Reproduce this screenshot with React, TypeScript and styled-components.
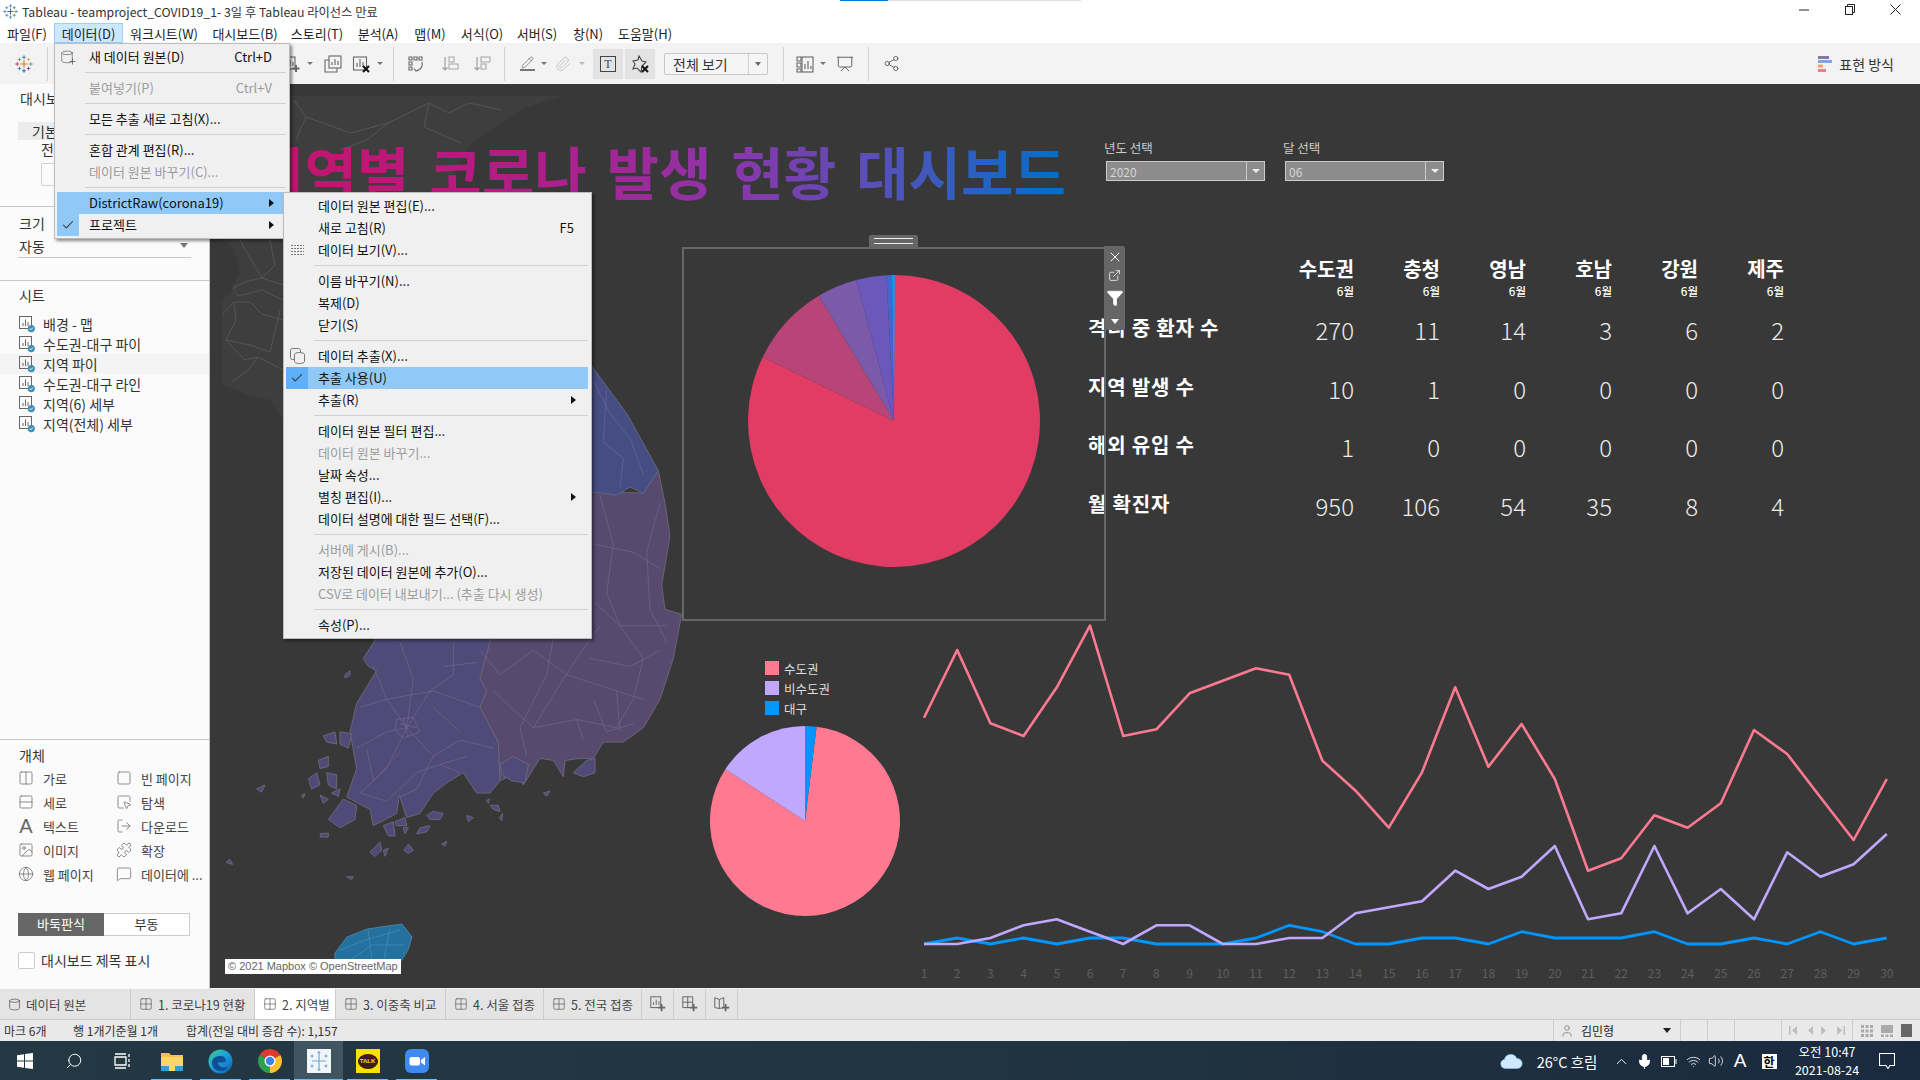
import React from "react";
import styled, { createGlobalStyle } from "styled-components";
import {
  Columns2, Rows2, Image as ImageIcon, Globe, Square, SquareMousePointer, LogOut, Puzzle, MessageSquare,
  Grid2x2, Cylinder, Pencil, Paperclip, Presentation, Share2, Search, ChevronUp, Mic, Wifi, Volume2, Check,
  User, ExternalLink, X, Filter, Plus,
} from "lucide-react";

const Global = createGlobalStyle`
  html, body { margin: 0; padding: 0; width: 1920px; height: 1080px; overflow: hidden; background: #383838; }
  body { font-family: "Noto Sans CJK KR", "Noto Sans", sans-serif; font-size: 12px; color: #222; }
  * { box-sizing: border-box; }
`;

const Window = styled.div`
  position: relative; width: 1920px; height: 1080px; display: flex; flex-direction: column; overflow: hidden;
`;

/* title bar */
const TitleBar = styled.div`
  position: relative; height: 23px; flex: none; background: #fff; display: flex; align-items: center;
  padding-left: 3px; gap: 4px; font-size: 12.3px; color: #333;
`;
const LoadTrack = styled.div`
  position: absolute; left: 840px; top: 0; width: 241px; height: 1px; background: #e0e0e0;
  &::before { content: ""; display: block; width: 48px; height: 100%; background: #0078d7; }
`;
const WindowButtons = styled.div`
  margin-left: auto; display: flex; align-items: center; height: 20px; margin-top: -4px; padding-right: 2px;
`;
const WindowButton = styled.div`
  width: 45.5px; display: flex; justify-content: center; align-items: center;
`;

/* menu bar */
const MenuBar = styled.div`
  height: 20px; flex: none; background: #fff; display: flex; align-items: stretch; font-size: 13px; color: #222;
`;
const MenuBarItem = styled.div<{ $open?: boolean; $w: number }>`
  width: ${(p) => p.$w}px; display: flex; align-items: center; justify-content: center; white-space: nowrap;
  background: ${(p) => (p.$open ? "#cce8ff" : "transparent")};
  border: 1px solid ${(p) => (p.$open ? "#99d1ff" : "transparent")};
`;

/* toolbar */
const Toolbar = styled.div`
  height: 41px; flex: none; background: #f3f3f3; display: flex; align-items: center; color: #666;
`;
const ToolSlot = styled.div<{ $w: number; $ml?: number; $on?: boolean }>`
  width: ${(p) => p.$w}px; margin-left: ${(p) => p.$ml ?? 0}px; height: 30px; flex: none;
  display: flex; align-items: center; justify-content: center;
  background: ${(p) => (p.$on ? "#e3e3e3" : "transparent")};
`;
const ToolCaret = styled.div<{ $ml?: number; $light?: boolean }>`
  width: 0; height: 0; flex: none; margin-left: ${(p) => p.$ml ?? 0}px;
  border-left: 3px solid transparent; border-right: 3px solid transparent;
  border-top: 3px solid ${(p) => (p.$light ? "#bbb" : "#777")};
`;
const ToolDivider = styled.div<{ $ml: number }>`
  width: 1px; height: 34px; flex: none; background: #d2d2d2; margin-left: ${(p) => p.$ml}px;
`;
const TextIconBox = styled.div`
  width: 16px; height: 16px; border: 1px solid #444; font-size: 12px; line-height: 14px; text-align: center; color: #444;
  font-family: "Liberation Serif", serif;
`;
const FitSelect = styled.div`
  width: 104px; height: 22px; margin-left: 9px; flex: none; background: #f5f5f5; border: 1px solid #c6c6c6; border-radius: 2px;
  display: flex; align-items: center; padding-left: 8px; font-size: 14px; color: #333;
`;
const FitArrow = styled.div`
  margin-left: auto; width: 19px; height: 100%; border-left: 1px solid #d0d0d0; display: flex; align-items: center; justify-content: center;
  &::after { content: ""; border-left: 3.5px solid transparent; border-right: 3.5px solid transparent; border-top: 4px solid #666; }
`;
const ShowMe = styled.div`
  margin-left: auto; padding-right: 26px; display: flex; align-items: center; gap: 7px; font-size: 14px; color: #333;
`;

/* main */
const Main = styled.div`
  height: 905px; flex: none; display: flex;
`;
const Sidebar = styled.aside`
  width: 210px; flex: none; background: #fbfbfb; display: flex; flex-direction: column; border-right: 1px solid #c4c4c4; font-size: 14px; color: #333;
`;
const DashSection = styled.section`
  height: 123px; flex: none; border-bottom: 1px solid #c8c8c8; padding: 5px 0 0 19px;
`;
const SizeSection = styled.section`
  height: 74px; flex: none; border-bottom: 1px solid #c8c8c8; padding: 7px 18px 0 18px;
`;
const SheetSection = styled.section`
  flex: 1; border-bottom: 1px solid #c8c8c8; padding-top: 5px;
`;
const ObjectSection = styled.section`
  height: 249px; flex: none; padding: 6px 18px 0;
`;
const SectionTitle = styled.div`
  font-size: 14px; line-height: 18px; color: #333; padding-left: 1px;
`;
const LayoutTab = styled.div`
  margin: 15px 0 0 -1px; height: 18px; line-height: 18px; background: #ececec; padding-left: 14px;
`;
const LayoutSub = styled.div`
  padding: 0 0 0 22px; height: 18px; line-height: 18px;
`;
const DeviceButton = styled.div`
  margin: 5px 0 0 22px; width: 60px; height: 23px; border: 1px solid #d0d0d0; border-radius: 2px;
`;
const SizeSelect = styled.div`
  margin-top: 2px; height: 24px; border-bottom: 1px solid #c8c8c8; display: flex; align-items: center; justify-content: space-between;
  padding: 0 3px 0 1px;
  &::after { content: ""; border-left: 4px solid transparent; border-right: 4px solid transparent; border-top: 5px solid #777; }
`;
const SheetTitle = styled(SectionTitle)`
  padding-left: 19px; margin-bottom: 10px;
`;
const SheetRow = styled.div<{ $hover?: boolean }>`
  height: 20px; display: flex; align-items: center; gap: 7px; padding-left: 19px;
  background: ${(p) => (p.$hover ? "#f4f4f4" : "transparent")};
`;
const ObjectGrid = styled.div`
  margin-top: 2px; display: grid; grid-template-columns: 98px 1fr; grid-auto-rows: 24px; align-items: center; font-size: 13px;
`;
const ObjectItem = styled.div`
  display: flex; align-items: center; white-space: nowrap; color: #444;
  & > svg, & > b { width: 16px; margin-right: 9px; flex: none; color: #666; }
  & > b { font-weight: 400; font-size: 20px; line-height: 20px; text-align: center; font-family: "Liberation Sans", sans-serif; }
`;
const LayoutToggle = styled.div`
  margin-top: 27px; width: 172px; height: 23px; display: grid; grid-template-columns: 86px 86px; text-align: center; line-height: 20px; font-size: 13px;
`;
const ToggleOn = styled.div`
  background: #666; color: #fff; border: 1px solid #666;
`;
const ToggleOff = styled.div`
  background: #fff; border: 1px solid #ccc; border-left: none;
`;
const TitleCheck = styled.div`
  margin-top: 14px; display: flex; align-items: center; gap: 6px;
  &::before { content: ""; width: 15px; height: 15px; background: #fff; border: 1px solid #ccc; border-radius: 2px; }
`;

/* canvas */
const Canvas = styled.div`
  position: relative; flex: 1; background: #383838; overflow: hidden; border-bottom: 1px solid #f4f4f4;
`;
const MapLayer = styled.svg`
  position: absolute; left: 0; top: 0; width: 1710px; height: 904px;
`;
const Attribution = styled.div`
  position: absolute; left: 15px; top: 875px; width: 176px; height: 15px; background: #fff; color: #666; white-space: nowrap;
  font: 11px/15px "Liberation Sans", sans-serif; padding-left: 3px;
`;
const Headline = styled.h1`
  position: absolute; left: 42px; top: 52px; margin: 0; white-space: nowrap; font-size: 57px; line-height: 68px; font-weight: 700;
  word-spacing: 7px;
  background: linear-gradient(90deg, #c8126a 0%, #b01e88 35%, #8d35aa 58%, #5a4fb8 76%, #0070c8 100%);
  -webkit-background-clip: text; background-clip: text; color: transparent;
`;
const ParamBox = styled.div<{ $left: number }>`
  position: absolute; left: ${(p) => p.$left}px; top: 57px; width: 160px; color: #ccc; font-size: 12.5px;
`;
const ParamLabel = styled.div`
  height: 20px; line-height: 14px;
`;
const ParamSelect = styled.div`
  margin-left: 2px; width: 159px; height: 20px; border: 1px solid #ccc; background: #8c8c8c; color: #d8d8d8; display: flex; align-items: center; padding-left: 3px; font-size: 12px;
`;
const ParamArrow = styled.div`
  margin-left: auto; width: 18px; height: 100%; border-left: 1px solid #ccc; display: flex; align-items: center; justify-content: center;
  &::after { content: ""; border-left: 4px solid transparent; border-right: 4px solid transparent; border-top: 4px solid #eee; }
`;
const SelectedFrame = styled.div`
  position: absolute; left: 472px; top: 163px; width: 424px; height: 374px; border: 2px solid #666;
  display: flex; justify-content: center; align-items: flex-start; padding-top: 26px;
`;
const FrameHandle = styled.div`
  position: absolute; left: 185px; top: -14px; width: 49px; height: 12px; background: #666; border-radius: 2px 2px 0 0;
  &::after { content: ""; position: absolute; left: 5px; right: 5px; top: 3px; height: 4px; border-top: 1px solid #eee; border-bottom: 1px solid #eee; }
`;
const FrameTools = styled.div`
  position: absolute; left: 894px; top: 162px; width: 21px; height: 84px; background: #666; border-radius: 0 2px 2px 0; z-index: 3;
  display: flex; flex-direction: column; align-items: center; padding-top: 3px; gap: 4px; color: #fff;
`;
const FunnelIcon = styled(Filter)`
  margin-top: 3px;
`;
const FrameCaret = styled.div`
  margin-top: 8px; border-left: 4px solid transparent; border-right: 4px solid transparent; border-top: 5px solid #fff;
`;
const CrossTab = styled.div`
  position: absolute; left: 878px; top: 172px; display: grid; grid-template-columns: 180px repeat(6, 86px); color: #fff;
`;
const HeadCell = styled.div`
  text-align: right; font-weight: 700; font-size: 20px; line-height: 25px; height: 44px; display: flex; flex-direction: column; align-items: flex-end;
`;
const HeadSub = styled.span`
  font-size: 11.5px; line-height: 18px; margin-top: 1px; font-weight: 500;
`;
const RowLabel = styled.div`
  font-weight: 700; font-size: 20px; height: 58.7px; line-height: 56px; color: #fff; letter-spacing: 0.8px; white-space: nowrap;
`;
const ValueCell = styled.div`
  font-size: 24px; height: 58.7px; line-height: 60px; text-align: right; font-weight: 300; color: #ececec;
`;
const Corner = styled.div``;
const Legend = styled.div`
  position: absolute; left: 555px; top: 577px; display: flex; flex-direction: column; gap: 6px; color: #ddd; font-size: 12.5px;
`;
const LegendRow = styled.div`
  display: flex; align-items: center; gap: 5px; height: 14px;
`;
const Swatch = styled.span<{ $c: string }>`
  width: 14px; height: 14px; background: ${(p) => p.$c};
`;
const SmallPie = styled.svg`
  position: absolute; left: 499px; top: 641px;
`;
const LineChart = styled.svg`
  position: absolute; left: 690px; top: 536px; width: 1020px; height: 368px;
`;

/* tabs */
const TabBar = styled.div`
  height: 31px; flex: none; background: #e4e4e4; border-bottom: 1px solid #ccc; display: flex; align-items: stretch; font-size: 12.5px; color: #444;
`;
const Tab = styled.div<{ $w: number; $active?: boolean }>`
  width: ${(p) => p.$w}px; flex: none; display: flex; align-items: center; gap: 5px; padding-left: 8px; white-space: nowrap;
  border-right: 1px solid #ccc; background: ${(p) => (p.$active ? "#fff" : "transparent")};
`;
const TabTool = styled.div`
  width: 32px; flex: none; display: flex; align-items: center; justify-content: center; border-right: 1px solid #ccc; position: relative; color: #666;
`;
const StatusBar = styled.div`
  height: 21px; flex: none; background: #e9e9e9; display: flex; align-items: center; font-size: 12px; color: #333;
`;
const StatusText = styled.span<{ $w: number }>`
  width: ${(p) => p.$w}px; flex: none; padding-left: 4px; white-space: nowrap;
`;
const UserCell = styled.div`
  margin-left: auto; width: 127px; height: 100%; flex: none; display: flex; align-items: center; gap: 7px; padding-left: 6px; border-left: 1px solid #ccc; color: #222;
  &::after { content: ""; margin-left: 42px; border-left: 4px solid transparent; border-right: 4px solid transparent; border-top: 5px solid #222; }
`;
const StatusCell = styled.div<{ $w: number }>`
  width: ${(p) => p.$w}px; height: 100%; flex: none; border-left: 1px solid #ccc; display: flex; align-items: center; justify-content: space-evenly;
`;

/* taskbar */
const Taskbar = styled.div`
  height: 40px; flex: none; background: linear-gradient(90deg, #233842 0%, #213540 50%, #1b2a3f 100%); display: flex; align-items: center; color: #fff;
`;
const TaskSlot = styled.div<{ $run?: boolean; $active?: boolean }>`
  position: relative; width: 49px; height: 100%; flex: none; display: flex; align-items: center; justify-content: center;
  background: ${(p) => (p.$active ? "#40555f" : "transparent")};
  &::after {
    content: ""; position: absolute; left: ${(p) => (p.$active ? 0 : 4)}px; right: ${(p) => (p.$active ? 0 : 4)}px; bottom: 0; height: 2px;
    background: ${(p) => (p.$run ? "#76b9ed" : "transparent")};
  }
`;
const Tray = styled.div`
  margin-left: auto; height: 100%; display: flex; align-items: center; padding-right: 15px;
`;
const TrayCell = styled.div<{ $w: number }>`
  width: ${(p) => p.$w}px; flex: none; display: flex; align-items: center; justify-content: center; white-space: nowrap; font-size: 12.5px;
`;
const Weather = styled(TrayCell)`
  font-size: 14.5px;
`;
const ImeBadge = styled.span`
  width: 15px; height: 15px; background: #fff; color: #000; font-size: 12px; line-height: 15px; text-align: center; font-weight: 700;
`;
const ImeLatin = styled.span`
  font-size: 19px; font-family: "Liberation Sans", sans-serif; font-weight: 400;
`;
const Clock = styled.div`
  display: flex; flex-direction: column; align-items: center; line-height: 18px; font-size: 12.5px;
`;
const KakaoIcon = styled.div`
  width: 24px; height: 24px; background: #fae100; display: flex; align-items: center; justify-content: center;
`;
const KakaoBubble = styled.div`
  width: 20px; height: 15px; border-radius: 50%; background: #3a1d1d; color: #fae100; font: 700 6px/15px "Liberation Sans", sans-serif; text-align: center;
`;

/* menus */
const PopupMenu = styled.div<{ $left: number; $top: number; $w: number }>`
  position: absolute; left: ${(p) => p.$left}px; top: ${(p) => p.$top}px; width: ${(p) => p.$w}px; z-index: 10;
  background: #f0f0f0; border: 1px solid #bcbcbc; padding: 2px 3px 2px 2px; box-shadow: 2px 2px 3px rgba(0,0,0,.45);
  font-size: 13px; color: #111;
`;
const MenuRow = styled.div<{ $hl?: boolean; $off?: boolean }>`
  height: 22px; display: flex; align-items: center; white-space: nowrap;
  background: ${(p) => (p.$hl ? "#90c8f6" : "transparent")};
  color: ${(p) => (p.$off ? "#9c9c9c" : "#111")};
`;
const MenuIcon = styled.div<{ $check?: "hl" | "dark" }>`
  width: 22px; height: 100%; flex: none; display: flex; align-items: center; justify-content: center; color: #555;
  background: ${(p) => (p.$check === "hl" ? "#5eb0f8" : p.$check === "dark" ? "#90c8f6" : "transparent")};
`;
const MenuLabel = styled.div`
  padding: 0 0 2px 10px; flex: 1;
`;
const MenuKey = styled.div`
  padding: 0 14px 2px 0;
`;
const MenuArrow = styled.div`
  margin-right: 12px; border-top: 4px solid transparent; border-bottom: 4px solid transparent; border-left: 5px solid #111;
`;
const MenuSep = styled.div<{ $inset: number }>`
  height: 9px; display: flex; align-items: center; padding-left: ${(p) => p.$inset}px;
  &::after { content: ""; flex: 1; height: 1px; background: #d0d0d0; }
`;

/* ---- drawings ---- */
const TableauMark = ({ size, mono }: { size: number; mono?: string }) => {
  const c = (col: string) => mono ?? col;
  const plus = (x: number, y: number, r: number, col: string, k: number) => (
    <path key={k} d={`M${x - r} ${y}H${x + r}M${x} ${y - r}V${y + r}`} stroke={c(col)} strokeWidth={r > 3 ? 1.6 : 1.1} fill="none" />
  );
  return (
    <svg width={size} height={size} viewBox="0 0 24 24">
      {[
        [12, 12, 5, "#e8762b"], [12, 3, 2.6, "#1f77b4"], [12, 21, 2.6, "#1f4f8a"], [3, 12, 2.6, "#c72035"], [21, 12, 2.6, "#5b879b"],
        [6, 6, 2.4, "#59a14f"], [18, 6, 2.4, "#eb9e3e"], [6, 18, 2.4, "#1f77b4"], [18, 18, 2.4, "#7b3294"],
      ].map((p, i) => plus(p[0] as number, p[1] as number, p[2] as number, p[3] as string, i))}
    </svg>
  );
};
const Ico = ({ children, w = 20, h = 20, vb = "0 0 20 20", color = "#666" }: { children: React.ReactNode; w?: number; h?: number; vb?: string; color?: string }) => (
  <svg width={w} height={h} viewBox={vb} fill="none" stroke={color} strokeWidth="1.1">{children}</svg>
);
const SheetIcon = () => (
  <svg width="17" height="17" viewBox="0 0 17 17" fill="none" style={{ flex: "none" }}>
    <rect x=".5" y=".5" width="12" height="12" stroke="#666" />
    <path d="M4 10V7M6.5 10V3.5M9 10V6" stroke="#666" />
    <circle cx="12.3" cy="12.6" r="3.6" fill="#3f8fb5" />
    <path d="M10.6 12.6l1.2 1.2 2.1-2.2" stroke="#fff" strokeWidth="1" />
  </svg>
);
const NavGlyph = ({ dir, bar }: { dir: "l" | "r"; bar?: boolean }) => (
  <svg width="9" height="9" viewBox="0 0 9 9" fill="#bdbdbd">
    {dir === "l" ? <path d="M8 0v9L3 4.500z" /> : <path d="M1 0v9l5-4.500z" />}
    {bar && (dir === "l" ? <rect x="0" width="1.500" height="9" /> : <rect x="7.500" width="1.500" height="9" />)}
  </svg>
);
const wedge = (cx: number, cy: number, r: number, a0: number, a1: number) => {
  const p = (a: number) => [cx + r * Math.sin((a * Math.PI) / 180), cy - r * Math.cos((a * Math.PI) / 180)];
  const [x0, y0] = p(a0), [x1, y1] = p(a1);
  return `M${cx} ${cy}L${x0} ${y0}A${r} ${r} 0 ${a1 - a0 > 180 ? 1 : 0} 1 ${x1} ${y1}Z`;
};

const pinkY = [353,150,370,408,262,77,408,388,280,242,205,224,482,572,683,517,262,500,372,537,812,775,646,683,610,390,462,592,720,537];
const purpleY = [1032,1032,1014,976,958,995,1032,976,976,1032,1032,1014,1014,940,922,904,812,867,830,738,958,940,738,940,867,958,757,830,793,702];
const blueY = [1032,1014,1032,1014,1032,1014,1014,1032,1032,1032,1014,976,995,1032,1032,1014,1014,1032,995,1014,1014,1014,995,1032,1032,1014,1032,995,1032,1014];
const linePts = (ys: number[]) => ys.map((y, i) => `${(924 + i * 33.2).toFixed(1)},${(600 + y / 3).toFixed(1)}`).join(" ");

const westPts = "530,730 490,780 505,800 530,810 470,890 450,960 470,1050 440,1120 510,1150 520,1190 590,1160 598,1115 620,1170 660,1160 700,1110 740,1085 790,1060 830,1110 870,1110 900,1080 895,985 840,900 860,860 840,830 870,740 900,700 700,600";
const gyeongPts = "895,985 840,900 860,860 840,830 870,740 900,700 1100,500 1176,372 1330,375 1375,320 1395,400 1410,480 1385,600 1395,660 1445,672 1420,780 1380,880 1330,950 1270,985 1210,985 1180,1025 1140,1025 1095,1030 1090,1070 1060,1030 1020,1025 970,1090 950,1060 900,1080";
const gangPts = "1100,300 1176,65 1280,180 1375,320 1330,375 1290,360 1250,380 1176,372 1100,500";
const islands = [
  "385,1175 430,1125 470,1140 465,1175 420,1195","325,1075 350,1060 360,1090 335,1100","355,1030 385,1020 385,1045 360,1050",
  "370,970 405,960 410,990 380,985","420,960 455,965 445,1000 420,990","380,1060 410,1065 410,1100 385,1090","360,1115 385,1125 370,1135",
  "395,1110 420,1100 415,1118","550,1190 580,1180 585,1215 565,1215","585,1180 615,1170 620,1190 590,1190","610,1195 625,1195 615,1210",
  "680,1165 700,1155 730,1160 720,1175 690,1175","800,1165 820,1170 805,1180","660,1195 690,1190 680,1205 650,1210","510,1255 540,1230 545,1250 525,1265",
  "550,1250 565,1245 555,1265","612,1250 625,1235 640,1250 625,1258","725,1235 740,1228 735,1240","898,1170 908,1160 905,1178","1030,1110 1050,1105 1040,1118",
  "860,1128 868,1125 865,1135","870,1140 895,1140 900,1155 880,1150","360,1210 385,1208 385,1218 362,1218","170,1100 195,1090 185,1108",
  "305,1115 315,1112 310,1122","78,1280 90,1272 98,1285","440,1315 460,1315 455,1322","435,820 450,810 450,822 435,828",
  "900,1040 940,1020 985,1040 975,1085 935,1080 905,1065","1120,1060 1160,1030 1185,1025 1185,1060 1150,1070",
];
const roads = [
  "1180,100 1230,180 1290,240 1330,330","1220,120 1210,250 1270,290 1260,360","1180,500 1300,520 1380,560","1200,380 1240,500 1220,620 1260,700 1330,780 1300,880 1250,950",
  "1380,400 1340,520 1350,660 1400,740","1180,640 1260,700 1400,700","1000,760 1100,820 1250,860 1330,880","880,860 1000,950 1130,930 1250,950",
  "1000,950 1060,870 1130,780 1200,700","1060,730 1040,820 960,950 980,1020","1130,930 1150,980","1250,860 1260,960","1170,780 1290,800 1380,760",
  "600,740 640,830 620,950 700,1020 780,980 880,1000","760,740 760,820 690,860 620,950","520,800 560,880 620,950","470,1000 560,960 620,950",
  "620,950 560,1050 480,1110 560,1130 650,1060 720,1040 800,1020","700,1020 650,1100 600,1120","480,900 560,880 700,860 840,900","720,1040 780,1060",
  "590,930 640,925 660,960 610,975 585,955 590,930","600,940 650,950","610,925 625,975","840,760 900,820 1000,760","1180,880 1220,960 1300,940",
  "500,1000 520,1080 600,1010","700,900 780,960","730,800 830,790",
];
const baseRoads = [
  "233,288 245,282 262,278 283,285","233,288 238,296 262,290 283,300","283,320 262,314 250,302 234,302 222,315","234,302 236,320 226,340 250,345 270,352",
  "226,340 245,360 258,357 283,370","258,357 248,370 232,382","270,352 280,310","270,240 275,265 262,278","240,240 250,258 262,278",
  "294,100 306,117 351,133 388,123 429,103 449,113 469,103 502,110","429,103 424,127 461,143","388,123 367,140 340,150","306,117 296,140",
  "500,750 510,735 560,730 590,745",
];

const MAP_TF = "translate(200 340) scale(.33333 .40816)";

const DashboardMap = () => (
  <MapLayer viewBox="210 84 1710 904">
    <polygon points="222,96 563,96 520,110 470,145 440,200 420,240 283,420 270,400 250,395 222,385 222,300 230,293 240,270 233,247 222,240" fill="#3e3e3e" />
    <g stroke="#555" strokeWidth="1" fill="none">{baseRoads.map((r) => <polyline key={r} points={r} />)}</g>
    <g transform={MAP_TF}>
      <polygon points={westPts} fill="#504a78" stroke="#6a6578" strokeWidth="1" vectorEffect="non-scaling-stroke" />
      <polygon points={gyeongPts} fill="#574a6e" stroke="#6a6578" strokeWidth="1" vectorEffect="non-scaling-stroke" />
      <polygon points={gangPts} fill="#454d82" stroke="#5f6885" strokeWidth="1" vectorEffect="non-scaling-stroke" />
      {islands.map((p) => <polygon key={p} points={p} fill="#504a78" stroke="#6a6578" strokeWidth="1" vectorEffect="non-scaling-stroke" />)}
      <g stroke="#7a7299" strokeOpacity=".5" strokeWidth="1" fill="none">
        {roads.map((r) => <polyline key={r} points={r} vectorEffect="non-scaling-stroke" />)}
      </g>
    </g>
    <polygon points="335,953 347,937 367,929 402,924 412,937 408,950 398,966 335,966" fill="#22719f" stroke="#4c7f9e" />
    <g stroke="#4a8db3" strokeOpacity=".7" fill="none">
      <polyline points="340,950 365,940 400,930" /><polyline points="350,960 372,945 404,945" /><polyline points="368,930 372,960" /><polyline points="390,928 384,960" />
    </g>
  </MapLayer>
);

const months = ["수도권", "충청", "영남", "호남", "강원", "제주"];
const rows: [string, number[]][] = [
  ["격리 중 환자 수", [270, 11, 14, 3, 6, 2]],
  ["지역 발생 수", [10, 1, 0, 0, 0, 0]],
  ["해외 유입 수", [1, 0, 0, 0, 0, 0]],
  ["월 확진자", [950, 106, 54, 35, 8, 4]],
];
const sheets = ["배경 - 맵", "수도권-대구 파이", "지역 파이", "수도권-대구 라인", "지역(6) 세부", "지역(전체) 세부"];
const iconProps = { size: 16, strokeWidth: 1.1 };

export default function App() {
  return (
    <Window>
      <Global />
      <TitleBar>
        <LoadTrack />
        <TableauMark size={15} mono="#2f78b4" />
        <span>Tableau - teamproject_COVID19_1- 3일 후 Tableau 라이선스 만료</span>
        <WindowButtons>
          <WindowButton><svg width="10" height="10" viewBox="0 0 10 10"><path d="M0 5h10" stroke="#222" /></svg></WindowButton>
          <WindowButton><svg width="10" height="11" viewBox="0 0 10 11" fill="none" stroke="#222"><rect x=".5" y="2.5" width="7" height="8" /><path d="M2.5 2.5v-2h7v8h-2" /></svg></WindowButton>
          <WindowButton><svg width="11" height="11" viewBox="0 0 11 11"><path d="M.5.5l10 10M10.500.5l-10 10" stroke="#222" /></svg></WindowButton>
        </WindowButtons>
      </TitleBar>
      <MenuBar>
        <MenuBarItem $w={54}>파일(F)</MenuBarItem>
        <MenuBarItem $w={69} $open>데이터(D)</MenuBarItem>
        <MenuBarItem $w={82}>워크시트(W)</MenuBarItem>
        <MenuBarItem $w={80}>대시보드(B)</MenuBarItem>
        <MenuBarItem $w={64}>스토리(T)</MenuBarItem>
        <MenuBarItem $w={58}>분석(A)</MenuBarItem>
        <MenuBarItem $w={46}>맵(M)</MenuBarItem>
        <MenuBarItem $w={58}>서식(O)</MenuBarItem>
        <MenuBarItem $w={52}>서버(S)</MenuBarItem>
        <MenuBarItem $w={50}>창(N)</MenuBarItem>
        <MenuBarItem $w={64}>도움말(H)</MenuBarItem>
      </MenuBar>
      <Toolbar>
        <ToolSlot $w={47}><TableauMark size={18} /></ToolSlot>
        <ToolDivider $ml={0} />
        <ToolSlot $w={28} $ml={229}>
          <Ico><rect x="3" y="3" width="11" height="12" /><path d="M6 12V9M9 12V6M12 12V8" /><path d="M15 11v7M11.500 14.500h7" strokeWidth="2" /></Ico>
        </ToolSlot>
        <ToolCaret $ml={2} />
        <ToolSlot $w={26} $ml={7}>
          <Ico><rect x="6" y="2" width="12" height="12" /><path d="M6 6H2v12h12v-4" /><path d="M9 11V8M12 11V5M15 11V7" /></Ico>
        </ToolSlot>
        <ToolSlot $w={28} $ml={1}>
          <Ico><rect x="2.500" y="3" width="13" height="13" /><path d="M6 13V9M9 13V5M12 13V8" /><path d="M12 12l6 6M18 12l-6 6" stroke="#111" strokeWidth="2" /></Ico>
        </ToolSlot>
        <ToolCaret $ml={2} />
        <ToolDivider $ml={10} />
        <ToolSlot $w={26} $ml={9}>
          <Ico><path d="M3 3h3v3H3zM8 3h3v3H8zM13 3h3v3h-3zM3 8h3v3H3zM3 13h3v3H3z" /><path d="M16 8c1 4-1 8-6 9M8 14.500l2 2.500 3-1" /></Ico>
        </ToolSlot>
        <ToolSlot $w={26} $ml={8}>
          <Ico color="#aaa"><path d="M5 3v13M2.500 13.500L5 16l2.500-2.500" stroke="#999" /><rect x="9" y="3" width="5" height="5" /><rect x="9" y="10" width="9" height="5" /></Ico>
        </ToolSlot>
        <ToolSlot $w={26} $ml={6}>
          <Ico color="#aaa"><path d="M5 3v13M2.500 13.500L5 16l2.500-2.500" stroke="#999" /><rect x="9" y="3" width="9" height="5" /><rect x="9" y="10" width="5" height="5" /></Ico>
        </ToolSlot>
        <ToolDivider $ml={9} />
        <ToolSlot $w={26} $ml={9}>
          <Pencil size={15} strokeWidth={1.1} color="#555" style={{ borderBottom: "2px solid #777" }} />
        </ToolSlot>
        <ToolCaret $ml={1} />
        <ToolSlot $w={26} $ml={3}><Paperclip size={16} strokeWidth={1.2} color="#bbb" /></ToolSlot>
        <ToolCaret $ml={3} $light />
        <ToolSlot $w={30} $ml={8} $on><TextIconBox>T</TextIconBox></ToolSlot>
        <ToolSlot $w={30} $ml={2} $on>
          <Ico color="#444"><path d="M9 2l3 5 4 1-4 4-1 6-4-4-4 1 2-5-2-3 5-1z" /><path d="M12 12l6 6M18 12l-6 6" stroke="#111" strokeWidth="2" /></Ico>
        </ToolSlot>
        <FitSelect>전체 보기<FitArrow /></FitSelect>
        <ToolDivider $ml={15} />
        <ToolSlot $w={26} $ml={8}>
          <Ico><path d="M2 3h4v4H2zM2 9h4v4H2zM2 15h4v3H2z" /><rect x="7" y="3" width="11" height="15" /><path d="M10 15v-5M13 15V7M16 15v-3" /></Ico>
        </ToolSlot>
        <ToolCaret $ml={2} />
        <ToolSlot $w={26} $ml={6}><Presentation size={18} strokeWidth={1.2} color="#555" /></ToolSlot>
        <ToolDivider $ml={10} />
        <ToolSlot $w={26} $ml={9}><Share2 size={17} strokeWidth={1.2} color="#555" /></ToolSlot>
        <ShowMe>
          <svg width="14" height="16" viewBox="0 0 14 16"><rect width="11" height="3" fill="#8b74a6" /><rect y="4" width="14" height="3" fill="#7ea6d6" /><rect y="8.500" width="5" height="3" fill="#f2a36b" /><rect y="13" width="8" height="3" fill="#f47c86" /></svg>
          표현 방식
        </ShowMe>
      </Toolbar>
      <Main>
        <Sidebar>
          <DashSection>
            <SectionTitle>대시보드</SectionTitle>
            <LayoutTab>기본</LayoutTab>
            <LayoutSub>전화</LayoutSub>
            <DeviceButton />
          </DashSection>
          <SizeSection>
            <SectionTitle>크기</SectionTitle>
            <SizeSelect>자동</SizeSelect>
          </SizeSection>
          <SheetSection>
            <SheetTitle>시트</SheetTitle>
            {sheets.map((s, i) => (
              <SheetRow key={s} $hover={i === 2}><SheetIcon />{s}</SheetRow>
            ))}
          </SheetSection>
          <ObjectSection>
            <SectionTitle>개체</SectionTitle>
            <ObjectGrid>
              <ObjectItem><Columns2 {...iconProps} />가로</ObjectItem>
              <ObjectItem><Square {...iconProps} />빈 페이지</ObjectItem>
              <ObjectItem><Rows2 {...iconProps} />세로</ObjectItem>
              <ObjectItem><SquareMousePointer {...iconProps} />탐색</ObjectItem>
              <ObjectItem><b>A</b>텍스트</ObjectItem>
              <ObjectItem><LogOut {...iconProps} />다운로드</ObjectItem>
              <ObjectItem><ImageIcon {...iconProps} />이미지</ObjectItem>
              <ObjectItem><Puzzle {...iconProps} />확장</ObjectItem>
              <ObjectItem><Globe {...iconProps} />웹 페이지</ObjectItem>
              <ObjectItem><MessageSquare {...iconProps} />데이터에 ...</ObjectItem>
            </ObjectGrid>
            <LayoutToggle><ToggleOn>바둑판식</ToggleOn><ToggleOff>부동</ToggleOff></LayoutToggle>
            <TitleCheck>대시보드 제목 표시</TitleCheck>
          </ObjectSection>
        </Sidebar>
        <Canvas>
          <DashboardMap />
          <Attribution>© 2021 Mapbox © OpenStreetMap</Attribution>
          <Headline>지역별 코로나 발생 현황 대시보드</Headline>
          <ParamBox $left={894}>
            <ParamLabel>년도 선택</ParamLabel>
            <ParamSelect>2020<ParamArrow /></ParamSelect>
          </ParamBox>
          <ParamBox $left={1073}>
            <ParamLabel>달 선택</ParamLabel>
            <ParamSelect>06<ParamArrow /></ParamSelect>
          </ParamBox>
          <CrossTab>
            <Corner />
            {months.map((m) => (
              <HeadCell key={m}>{m}<HeadSub>6월</HeadSub></HeadCell>
            ))}
            {rows.map(([label, vals]) => (
              <React.Fragment key={label}>
                <RowLabel>{label}</RowLabel>
                {vals.map((v, i) => <ValueCell key={i}>{v}</ValueCell>)}
              </React.Fragment>
            ))}
          </CrossTab>
          <SelectedFrame>
            <FrameHandle />
            <svg width="292" height="292" viewBox="-146 -146 292 292">
              <path d={wedge(0, 0, 146, 0, 296)} fill="#e03c64" />
              <path d={wedge(0, 0, 146, 296, 329)} fill="#b84577" />
              <path d={wedge(0, 0, 146, 329, 345)} fill="#7c5aaa" />
              <path d={wedge(0, 0, 146, 345, 357)} fill="#6a58bb" />
              <path d={wedge(0, 0, 146, 357, 359.2)} fill="#4466d0" />
              <path d={wedge(0, 0, 146, 359.2, 360.3)} fill="#00a0ff" />
            </svg>
          </SelectedFrame>
          <FrameTools>
            <X size={16} strokeWidth={1.5} />
            <ExternalLink size={13} strokeWidth={1.4} />
            <FunnelIcon size={18} fill="#fff" strokeWidth={1} />
            <FrameCaret />
          </FrameTools>
          <Legend>
            <LegendRow><Swatch $c="#ff7a90" />수도권</LegendRow>
            <LegendRow><Swatch $c="#c0a8ff" />비수도권</LegendRow>
            <LegendRow><Swatch $c="#0096ff" />대구</LegendRow>
          </Legend>
          <SmallPie width="192" height="192" viewBox="-96 -96 192 192">
            <path d={wedge(0, 0, 95, 7, 303)} fill="#ff7a90" />
            <path d={wedge(0, 0, 95, 303, 360)} fill="#c0a8ff" />
            <path d={wedge(0, 0, 95, 0, 7)} fill="#0096ff" />
          </SmallPie>
          <LineChart viewBox="900 620 1020 368">
            <polyline points={linePts(pinkY)} fill="none" stroke="#ff7a90" strokeWidth="2.6" strokeLinejoin="round" />
            <polyline points={linePts(blueY)} fill="none" stroke="#0096ff" strokeWidth="2.8" strokeLinejoin="round" />
            <polyline points={linePts(purpleY)} fill="none" stroke="#c0a8ff" strokeWidth="2.6" strokeLinejoin="round" />
            {pinkY.map((_, i) => (
              <text key={i} x={924 + i * 33.2} y={978} fill="#5f5f5f" fontSize="12" textAnchor="middle" fontFamily="Noto Sans CJK KR, sans-serif">{i + 1}</text>
            ))}
          </LineChart>
        </Canvas>
      </Main>
      <TabBar>
        <Tab $w={131}><Cylinder size={13} strokeWidth={1.2} />데이터 원본</Tab>
        <Tab $w={124}><Grid2x2 size={14} strokeWidth={1} />1. 코로나19 현황</Tab>
        <Tab $w={81} $active><Grid2x2 size={14} strokeWidth={1} />2. 지역별</Tab>
        <Tab $w={110}><Grid2x2 size={14} strokeWidth={1} />3. 이중축 비교</Tab>
        <Tab $w={98}><Grid2x2 size={14} strokeWidth={1} />4. 서울 접종</Tab>
        <Tab $w={98}><Grid2x2 size={14} strokeWidth={1} />5. 전국 접종</Tab>
        <TabTool><Ico w={18} h={18} vb="0 0 20 20"><rect x="2" y="2" width="11" height="12" /><path d="M5 11V8M8 11V5M11 11V7" /><path d="M14 10v8M10 14h8" strokeWidth="2" /></Ico></TabTool>
        <TabTool><Ico w={18} h={18} vb="0 0 20 20"><path d="M2 2h11v12H2zM7.500 2v12M2 8h11" /><path d="M14 10v8M10 14h8" strokeWidth="2" /></Ico></TabTool>
        <TabTool><Ico w={18} h={18} vb="0 0 20 20"><path d="M2 3l5 2 5-2v11l-5 1-5-1zM7 5v10" /><path d="M14 10v8M10 14h8" strokeWidth="2" /></Ico></TabTool>
      </TabBar>
      <StatusBar>
        <StatusText $w={69}>마크 6개</StatusText>
        <StatusText $w={113}>행 1개기준월 1개</StatusText>
        <StatusText $w={260}>합계(전일 대비 증감 수): 1,157</StatusText>
        <UserCell><User size={14} strokeWidth={1.1} color="#666" /><span>김민형</span></UserCell>
        <StatusCell $w={27} />
        <StatusCell $w={27} />
        <StatusCell $w={47} />
        <StatusCell $w={71}><NavGlyph dir="l" bar /><NavGlyph dir="l" /><NavGlyph dir="r" /><NavGlyph dir="r" bar /></StatusCell>
        <StatusCell $w={68}>
          <svg width="12" height="12" viewBox="0 0 12 12" fill="#aaa"><path d="M0 0h3v3H0zM4.500 0h3v3h-3zM9 0h3v3H9zM0 4.500h3v3H0zM4.500 4.500h3v3h-3zM9 4.500h3v3H9zM0 9h3v3H0zM4.500 9h3v3h-3zM9 9h3v3H9z" /></svg>
          <svg width="12" height="12" viewBox="0 0 12 12" fill="#aaa"><path d="M0 0h12v8H0zM0 9.500h3V12H0zM4.500 9.500h3V12h-3zM9 9.500h3V12H9z" /></svg>
          <svg width="11" height="13" viewBox="0 0 11 13" fill="#666"><rect width="11" height="13" /></svg>
        </StatusCell>
      </StatusBar>
      <Taskbar>
        <TaskSlot>
          <svg width="16" height="16" viewBox="0 0 16 16" fill="#fff"><path d="M0 2.300l7-1v6.300H0zM8 1.100L16 0v7.600H8zM0 8.400h7v6.300l-7-1zM8 8.400h8V16l-8-1.100z" /></svg>
        </TaskSlot>
        <TaskSlot><Search size={18} strokeWidth={1.3} color="#fff" style={{ transform: "scaleX(-1)" }} /></TaskSlot>
        <TaskSlot>
          <svg width="18" height="16" viewBox="0 0 18 16" fill="none" stroke="#fff" strokeWidth="1.3"><path d="M1 4h11v8H1zM1 1h11M1 15h11M15 1v3M15 6v3M15 11v3" /></svg>
        </TaskSlot>
        <TaskSlot $run>
          <svg width="22" height="20" viewBox="0 0 22 20"><path d="M0 2h8l2 2h12v16H0z" fill="#f6c443" /><rect y="6" width="22" height="14" fill="#fcd768" /><rect x="0" y="15" width="22" height="5" fill="#3a9ad9" /><rect x="8" y="14" width="6" height="6" fill="#fcd768" /></svg>
        </TaskSlot>
        <TaskSlot $run>
          <svg width="25" height="25" viewBox="0 0 25 25"><defs><linearGradient id="ed" x1="0" y1="0" x2="1" y2="1"><stop offset="0" stopColor="#3fd08a" /><stop offset=".5" stopColor="#1b9de2" /><stop offset="1" stopColor="#0c59a4" /></linearGradient></defs><circle cx="12.500" cy="12.500" r="12" fill="url(#ed)" /><path d="M4 14c0-5 4-7 8-7 3.500 0 6 2 6 4.500 0 1.500-1.500 2-3.500 2H10c0 3 3 5 6 5 2 0 4-.5 5-1.500-2 3-5 5-8.500 5C8 22 4 19 4 14z" fill="#0f4f94" /></svg>
        </TaskSlot>
        <TaskSlot $run>
          <svg width="24" height="24" viewBox="0 0 24 24"><path d={wedge(12, 12, 12, -60, 60)} fill="#e0392d" /><path d={wedge(12, 12, 12, 60, 180)} fill="#fbc02d" /><path d={wedge(12, 12, 12, 180, 300)} fill="#2e9e4f" /><circle cx="12" cy="12" r="5.500" fill="#fff" /><circle cx="12" cy="12" r="4.200" fill="#3f82e8" /></svg>
        </TaskSlot>
        <TaskSlot $run $active>
          <svg width="24" height="24" viewBox="0 0 24 24"><rect width="24" height="24" fill="#f2f5f7" /><path d="M12 5v14M5 12h14M5 5.500v3M3.500 7h3M19 5.500v3M17.500 7h3M5 15.500v3M3.500 17h3M19 15.500v3M17.500 17h3M12 2v3M10.500 3.500h3M12 19v3M10.500 20.500h3" stroke="#6ea9cf" strokeWidth="1.200" /></svg>
        </TaskSlot>
        <TaskSlot $run><KakaoIcon><KakaoBubble>TALK</KakaoBubble></KakaoIcon></TaskSlot>
        <TaskSlot $run>
          <svg width="24" height="24" viewBox="0 0 24 24"><rect width="24" height="24" rx="6" fill="#3d8bf2" /><rect x="4.500" y="8" width="10.500" height="8.500" rx="2" fill="#fff" /><path d="M16 11l4-3v8.500l-4-3z" fill="#fff" /></svg>
        </TaskSlot>
        <Tray>
          <TrayCell $w={28}>
            <svg width="23" height="16" viewBox="0 0 23 16"><path d="M5 15.500a4.500 4.500 0 0 1-.6-8.900A6.500 6.500 0 0 1 16.800 5.500 5 5 0 0 1 17.500 15.500z" fill="#cfe8fb" stroke="#8fc6ec" strokeWidth=".6" /></svg>
          </TrayCell>
          <Weather $w={84}>26°C 흐림</Weather>
          <TrayCell $w={24}><ChevronUp size={17} strokeWidth={1.3} /></TrayCell>
          <TrayCell $w={23}><Mic size={17} strokeWidth={1.3} fill="#fff" /></TrayCell>
          <TrayCell $w={26}>
            <svg width="16" height="11" viewBox="0 0 16 11" fill="none" stroke="#fff"><rect x=".5" y=".5" width="13" height="10" /><rect x="2" y="2" width="6" height="7" fill="#fff" stroke="none" /><path d="M15 3v5" /></svg>
          </TrayCell>
          <TrayCell $w={23}><Wifi size={15} strokeWidth={1.3} /></TrayCell>
          <TrayCell $w={22}><Volume2 size={16} strokeWidth={1.2} /></TrayCell>
          <TrayCell $w={26}><ImeLatin>A</ImeLatin></TrayCell>
          <TrayCell $w={32}><ImeBadge>한</ImeBadge></TrayCell>
          <TrayCell $w={84}><Clock><span>오전 10:47</span><span>2021-08-24</span></Clock></TrayCell>
          <TrayCell $w={36}>
            <svg width="16" height="16" viewBox="0 0 16 16" fill="none" stroke="#fff" strokeWidth="1.1"><path d="M.5.500h15v12H11l-2 3-2-3H.5z" /></svg>
          </TrayCell>
        </Tray>
      </Taskbar>

      <PopupMenu $left={54} $top={43} $w={236}>
        <MenuRow><MenuIcon><Cylinder size={14} strokeWidth={1.1} /><Plus size={9} strokeWidth={2} style={{ marginLeft: -6, marginTop: 8 }} /></MenuIcon><MenuLabel>새 데이터 원본(D)</MenuLabel><MenuKey>Ctrl+D</MenuKey></MenuRow>
        <MenuSep $inset={28} />
        <MenuRow $off><MenuIcon /><MenuLabel>붙여넣기(P)</MenuLabel><MenuKey>Ctrl+V</MenuKey></MenuRow>
        <MenuSep $inset={28} />
        <MenuRow><MenuIcon /><MenuLabel>모든 추출 새로 고침(X)...</MenuLabel></MenuRow>
        <MenuSep $inset={28} />
        <MenuRow><MenuIcon /><MenuLabel>혼합 관계 편집(R)...</MenuLabel></MenuRow>
        <MenuRow $off><MenuIcon /><MenuLabel>데이터 원본 바꾸기(C)...</MenuLabel></MenuRow>
        <MenuSep $inset={28} />
        <MenuRow $hl><MenuIcon $check="dark" /><MenuLabel>DistrictRaw(corona19)</MenuLabel><MenuArrow /></MenuRow>
        <MenuRow><MenuIcon $check="dark"><Check size={14} strokeWidth={1.8} color="#333" /></MenuIcon><MenuLabel>프로젝트</MenuLabel><MenuArrow /></MenuRow>
      </PopupMenu>

      <PopupMenu $left={283} $top={192} $w={309}>
        <MenuRow><MenuIcon /><MenuLabel>데이터 원본 편집(E)...</MenuLabel></MenuRow>
        <MenuRow><MenuIcon /><MenuLabel>새로 고침(R)</MenuLabel><MenuKey>F5</MenuKey></MenuRow>
        <MenuRow><MenuIcon>
          <svg width="13" height="10" viewBox="0 0 13 10" stroke="#777" strokeWidth="1"><path d="M0 .5h13M0 3.500h13M0 6.500h13M0 9.500h13" strokeDasharray="2 1" /></svg>
        </MenuIcon><MenuLabel>데이터 보기(V)...</MenuLabel></MenuRow>
        <MenuSep $inset={28} />
        <MenuRow><MenuIcon /><MenuLabel>이름 바꾸기(N)...</MenuLabel></MenuRow>
        <MenuRow><MenuIcon /><MenuLabel>복제(D)</MenuLabel></MenuRow>
        <MenuRow><MenuIcon /><MenuLabel>닫기(S)</MenuLabel></MenuRow>
        <MenuSep $inset={28} />
        <MenuRow><MenuIcon>
          <svg width="15" height="16" viewBox="0 0 15 16" fill="none" stroke="#777"><rect x=".5" y=".5" width="10" height="11" rx="2" /><ellipse cx="9.500" cy="6.500" rx="5" ry="2" fill="#f0f0f0" /><path d="M4.500 6.500v7c0 1 2 2 5 2s5-1 5-2v-7" fill="#f0f0f0" /></svg>
        </MenuIcon><MenuLabel>데이터 추출(X)...</MenuLabel></MenuRow>
        <MenuRow $hl><MenuIcon $check="hl"><Check size={14} strokeWidth={1.8} color="#333" /></MenuIcon><MenuLabel>추출 사용(U)</MenuLabel></MenuRow>
        <MenuRow><MenuIcon /><MenuLabel>추출(R)</MenuLabel><MenuArrow /></MenuRow>
        <MenuSep $inset={28} />
        <MenuRow><MenuIcon /><MenuLabel>데이터 원본 필터 편집...</MenuLabel></MenuRow>
        <MenuRow $off><MenuIcon /><MenuLabel>데이터 원본 바꾸기...</MenuLabel></MenuRow>
        <MenuRow><MenuIcon /><MenuLabel>날짜 속성...</MenuLabel></MenuRow>
        <MenuRow><MenuIcon /><MenuLabel>별칭 편집(I)...</MenuLabel><MenuArrow /></MenuRow>
        <MenuRow><MenuIcon /><MenuLabel>데이터 설명에 대한 필드 선택(F)...</MenuLabel></MenuRow>
        <MenuSep $inset={28} />
        <MenuRow $off><MenuIcon /><MenuLabel>서버에 게시(B)...</MenuLabel></MenuRow>
        <MenuRow><MenuIcon /><MenuLabel>저장된 데이터 원본에 추가(O)...</MenuLabel></MenuRow>
        <MenuRow $off><MenuIcon /><MenuLabel>CSV로 데이터 내보내기... (추출 다시 생성)</MenuLabel></MenuRow>
        <MenuSep $inset={28} />
        <MenuRow><MenuIcon /><MenuLabel>속성(P)...</MenuLabel></MenuRow>
      </PopupMenu>
    </Window>
  );
}
